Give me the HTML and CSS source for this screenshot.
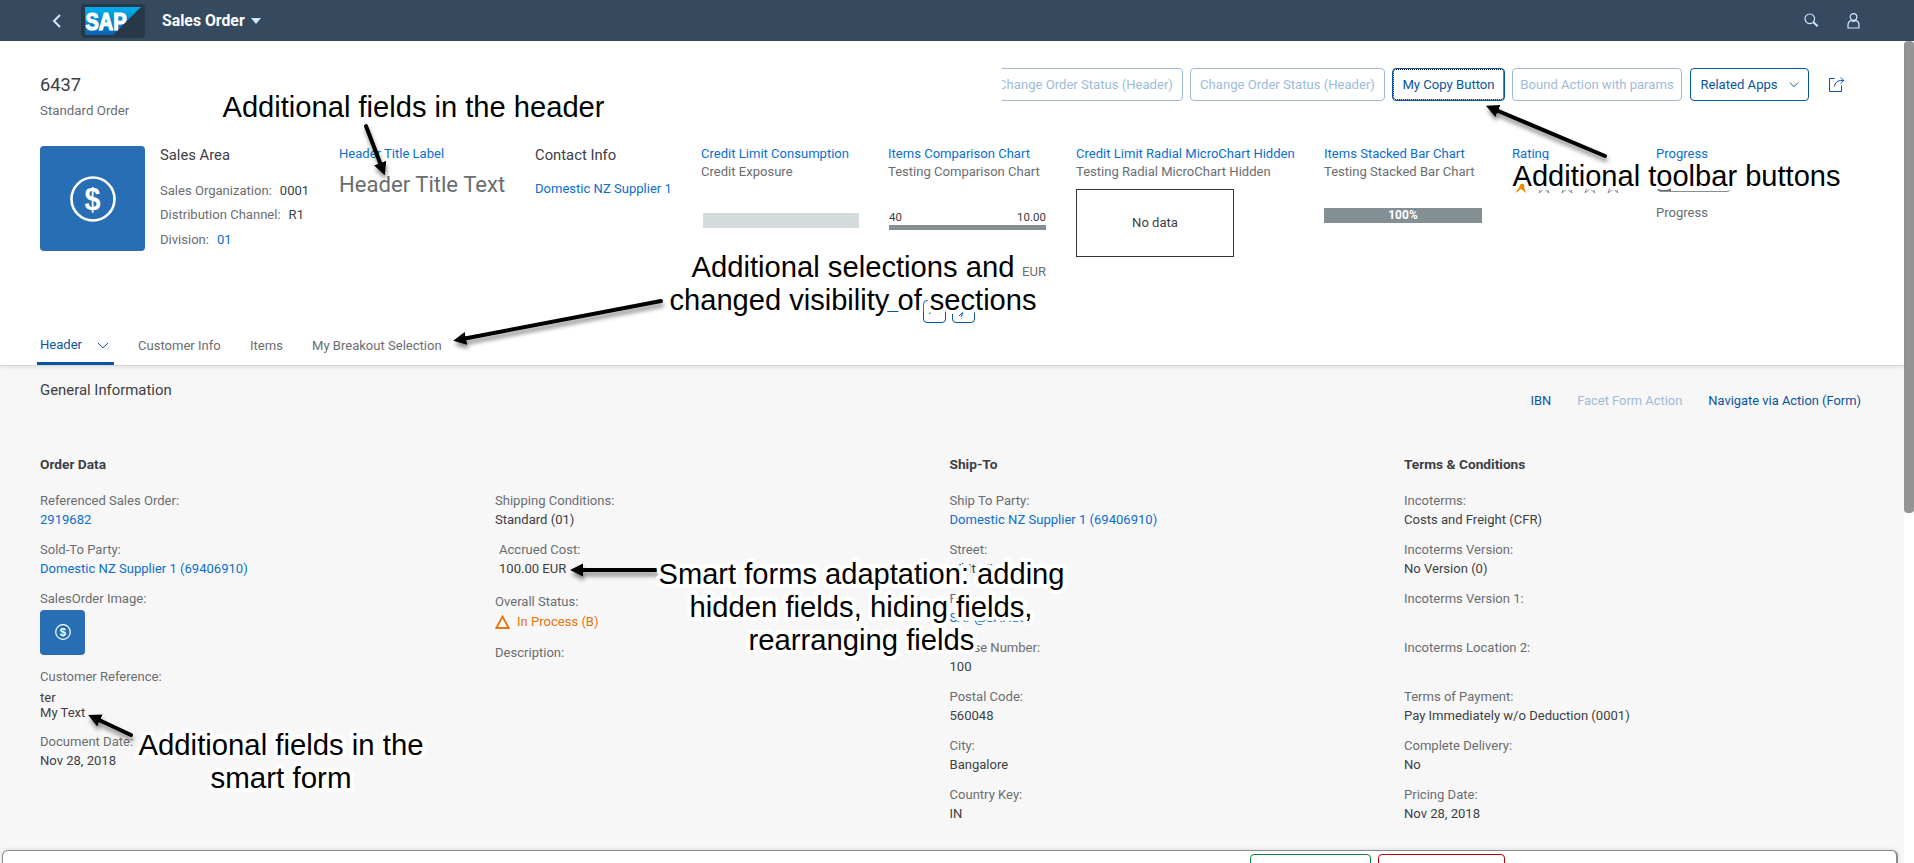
FILE: index.html
```html
<!DOCTYPE html>
<html lang="en">
<head>
<meta charset="utf-8">
<title>Sales Order</title>
<link rel="stylesheet" href="styles.css">
</head>
<body>
<div class="page">
  <header class="shell">
    <svg class="back" width="10" height="14" viewBox="0 0 10 14"><path d="M8 1 2 7l6 6" fill="none" stroke="#d1e8ff" stroke-width="2"/></svg>
    <div class="logo">
      <svg width="56" height="28" viewBox="0 0 56 28">
        <defs><linearGradient id="sap" x1="0" y1="0" x2="0" y2="1"><stop offset="0" stop-color="#00b1eb"/><stop offset="1" stop-color="#0a61b5"/></linearGradient></defs>
        <path d="M0 0h56L28 28H0z" fill="url(#sap)"/>
        <text class="logo-text" x="0.5" y="22.5" textLength="41" lengthAdjust="spacingAndGlyphs">SAP</text>
      </svg>
    </div>
    <span class="shell-title">Sales Order</span>
    <svg width="10" height="6" viewBox="0 0 10 6"><path d="M0 0h10L5 6z" fill="#d1e8ff"/></svg>
    <div class="shell-icons">
      <svg width="15" height="15" viewBox="0 0 15 15" fill="none" stroke="#d1e8ff"><circle cx="5.8" cy="5.8" r="4.8" stroke-width="1.2"/><path d="m9.3 9.3 4.4 4" stroke-width="2"/></svg>
      <svg width="13" height="16" viewBox="0 0 13 16" fill="none" stroke="#d1e8ff" stroke-width="1.2"><circle cx="6.5" cy="4" r="3.3"/><path d="M1 15v-3c0-2.500 1.500-4 3-4.500 1.500 1 3.500 1 5 0 1.500.5 3 2 3 4.500v3z"/></svg>
    </div>
  </header>
  <div class="body">
    <main class="content">
      <section class="object-header">
        <div class="title-row">
          <div class="titles"><h1>6437</h1><div class="subtitle">Standard Order</div></div>
          <div class="toolbar">
            <button class="btn disabled clipped">Change Order Status (Header)</button>
            <button class="btn disabled b-change">Change Order Status (Header)</button>
            <button class="btn focused">My Copy Button</button>
            <button class="btn disabled b-bound">Bound Action with params</button>
            <button class="btn b-related">Related Apps <svg width="10" height="6" viewBox="0 0 10 6"><path d="m1 .7 4 4 4-4" fill="none" stroke="#0854a0"/></svg></button>
            <svg class="share" width="16" height="15" viewBox="0 0 16 15" fill="none" stroke="#0854a0"><path d="M5.500 1.500h-5v13h12V8.500M5.500 9.500c.3-3.500 2.500-5.800 6-6h3M11.700.5l3 3-3 3"/></svg>
          </div>
        </div>
        <div class="facets">
          <div class="avatar"><svg width="46" height="46" viewBox="0 0 46 46"><circle cx="23" cy="23" r="21.500" fill="none" stroke="#fff" stroke-width="2.600"/><text x="14.500" y="33.500" textLength="16" lengthAdjust="spacingAndGlyphs" class="dollar">$</text></svg></div>
          <div class="facet area">
            <h2>Sales Area</h2>
            <div class="pair"><span>Sales Organization:</span><b>0001</b></div>
            <div class="pair"><span>Distribution Channel:</span><b>R1</b></div>
            <div class="pair"><span>Division:</span><a>01</a></div>
          </div>
          <div class="facet"><a class="facet-title">Header Title Label</a><div class="big">Header Title Text</div></div>
          <div class="facet contact"><h2>Contact Info</h2><a>Domestic NZ Supplier 1</a></div>
          <div class="facet"><a class="facet-title">Credit Limit Consumption</a><div class="facet-sub">Credit Exposure</div><div class="bullet"></div></div>
          <div class="facet"><a class="facet-title">Items Comparison Chart</a><div class="facet-sub">Testing Comparison Chart</div>
            <div class="compare"><span>40</span><span>10.00</span></div><div class="unit">EUR</div></div>
          <div class="facet"><a class="facet-title">Credit Limit Radial MicroChart Hidden</a><div class="facet-sub">Testing Radial MicroChart Hidden</div><div class="nodata">No data</div></div>
          <div class="facet"><a class="facet-title">Items Stacked Bar Chart</a><div class="facet-sub">Testing Stacked Bar Chart</div><div class="stacked">100%</div></div>
          <div class="facet"><a class="facet-title">Rating</a>
            <svg class="stars" width="114" height="18" viewBox="0 0 114 18" fill="none"><path d="m9 1 2 6h6l-5 4 2 6-5-4-5 4 2-6-5-4h6z" fill="#e78c07"/><g stroke="#8a8f94"><path id="star" d="m32 1 2 6h6l-5 4 2 6-5-4-5 4 2-6-5-4h6z"/><use href="#star" x="23"/><use href="#star" x="46"/><use href="#star" x="69"/></g></svg>
          </div>
          <div class="facet"><a class="facet-title">Progress</a><div class="progress"><i></i></div><div class="progress-label">Progress</div></div>
        </div>
        <div class="collapse"><i class="rule"></i>
          <span class="mini"><svg width="13" height="8" viewBox="0 0 13 8"><path d="m1 6 5.500-5L12 6" fill="none" stroke="#0854a0"/></svg></span>
          <span class="mini"><svg width="12" height="12" viewBox="0 0 12 12"><path d="m1 10 5-5 5 3M6 5 3 11" fill="none" stroke="#0854a0"/></svg></span>
        <i class="rule"></i></div>
        <nav class="tabs">
          <a class="tab active">Header <svg width="12" height="7" viewBox="0 0 12 7"><path d="m.8.800 5.200 5 5.200-5" fill="none" stroke="#0854a0"/></svg></a>
          <a class="tab t-cust">Customer Info</a><a class="tab t-items">Items</a><a class="tab">My Breakout Selection</a>
        </nav>
      </section>
      <section class="details">
        <div class="section-head"><h2>General Information</h2>
          <div class="links"><a>IBN</a><a class="off">Facet Form Action</a><a>Navigate via Action (Form)</a></div></div>
        <div class="form">
          <div class="col">
            <h3>Order Data</h3>
            <div class="field"><label>Referenced Sales Order:</label><a>2919682</a></div>
            <div class="field"><label>Sold-To Party:</label><a>Domestic NZ Supplier 1 (69406910)</a></div>
            <div class="field image"><label>SalesOrder Image:</label><div class="thumb"><svg width="16" height="16" viewBox="0 0 46 46"><circle cx="23" cy="23" r="21" fill="none" stroke="#fff" stroke-width="3.500"/><text x="14" y="34" class="dollar">$</text></svg></div></div>
            <div class="field ref"><label>Customer Reference:</label><p>ter</p><p>My Text</p></div>
            <div class="field"><label>Document Date:</label><p>Nov 28, 2018</p></div>
          </div>
          <div class="col">
            <h3></h3>
            <div class="field"><label>Shipping Conditions:</label><p>Standard (01)</p></div>
            <div class="field shifted"><label>Accrued Cost:</label><p>100.00 EUR</p></div>
            <div class="field status"><label>Overall Status:</label><p><svg width="15" height="14" viewBox="0 0 15 14"><path d="M7.500 1.500 13.700 13H1.300z" fill="none" stroke="#e9730c" stroke-width="1.800"/></svg>In Process (B)</p></div>
            <div class="field"><label>Description:</label></div>
          </div>
          <div class="col">
            <h3>Ship-To</h3>
            <div class="field"><label>Ship To Party:</label><a>Domestic NZ Supplier 1 (69406910)</a></div>
            <div class="field"><label>Street:</label><p>WhiteField</p></div>
            <div class="field"><label>Fax:</label><a>SAP@SAP.de</a></div>
            <div class="field"><label>House Number:</label><p>100</p></div>
            <div class="field"><label>Postal Code:</label><p>560048</p></div>
            <div class="field"><label>City:</label><p>Bangalore</p></div>
            <div class="field"><label>Country Key:</label><p>IN</p></div>
          </div>
          <div class="col">
            <h3>Terms &amp; Conditions</h3>
            <div class="field"><label>Incoterms:</label><p>Costs and Freight (CFR)</p></div>
            <div class="field"><label>Incoterms Version:</label><p>No Version (0)</p></div>
            <div class="field"><label>Incoterms Version 1:</label><p></p></div>
            <div class="field"><label>Incoterms Location 2:</label><p></p></div>
            <div class="field"><label>Terms of Payment:</label><p>Pay Immediately w/o Deduction (0001)</p></div>
            <div class="field"><label>Complete Delivery:</label><p>No</p></div>
            <div class="field"><label>Pricing Date:</label><p>Nov 28, 2018</p></div>
          </div>
        </div>
      </section>
      <footer class="footer"><span class="fbtn accept"></span><span class="fbtn reject"></span></footer>
    </main>
    <div class="scroll"><div class="thumb-bar"></div></div>
  </div>
  <svg class="notes" width="1914" height="863" viewBox="0 0 1914 863">
    <defs>
      <marker id="head" markerUnits="userSpaceOnUse" markerWidth="14" markerHeight="14" refX="1" refY="6.500" orient="auto"><path d="M0 0 13 6.500 0 13z"/></marker>
    </defs>
    <g class="arrows">
      <path d="M366 126 380.500 164" marker-end="url(#head)"/>
      <path d="M661 301 465 338.500" marker-end="url(#head)"/>
      <path d="M1605 156 1497 110.500" marker-end="url(#head)"/>
      <path d="M656 570H582" marker-end="url(#head)"/>
      <path d="M131 735 99 720" marker-end="url(#head)"/>
    </g>
    <g class="note">
      <text x="222.500" y="116.500" textLength="382" lengthAdjust="spacingAndGlyphs">Additional fields in the header</text>
      <text x="691.500" y="276.500" textLength="323" lengthAdjust="spacingAndGlyphs">Additional selections and</text>
      <text x="669.500" y="309.500" textLength="367" lengthAdjust="spacingAndGlyphs">changed visibility of sections</text>
      <text x="1512.500" y="185.500" textLength="328" lengthAdjust="spacingAndGlyphs">Additional toolbar buttons</text>
      <text x="658.500" y="583.500" textLength="406" lengthAdjust="spacingAndGlyphs">Smart forms adaptation: adding</text>
      <text x="689.500" y="616.500" textLength="343" lengthAdjust="spacingAndGlyphs">hidden fields, hiding fields,</text>
      <text x="748.500" y="649.500" textLength="226" lengthAdjust="spacingAndGlyphs">rearranging fields</text>
      <text x="138.500" y="754.500" textLength="285" lengthAdjust="spacingAndGlyphs">Additional fields in the</text>
      <text x="210.500" y="787.500" textLength="141" lengthAdjust="spacingAndGlyphs">smart form</text>
    </g>
  </svg>
</div>
</body>
</html>
```

FILE: styles.css
```css
* { box-sizing: border-box; }
body { margin: 0; background: #fff; font: 13.05px/18px Roboto, "Liberation Sans", sans-serif; color: #3c4044; overflow: hidden; }
h1, h2, h3, p { margin: 0; font-weight: 400; }
a { color: #0a6ed1; text-decoration: none; }
svg { display: block; }
.page { position: relative; width: 1914px; height: 863px; overflow: hidden; display: flex; flex-direction: column; }

.shell { height: 41px; flex: none; background: #354a5f; display: flex; align-items: center; padding: 0 54px 0 52px; }
.logo { width: 64px; height: 34px; margin-left: 19px; border-radius: 4px; background: #283848; display: flex; align-items: center; padding-left: 4px; }
.logo-text { font: bold 23px "Liberation Sans", sans-serif; fill: #fff; stroke: #fff; stroke-width: 1.2; }
.shell-title { margin: 0 6px 0 17px; color: #fff; font-size: 15.8px; font-weight: 700; }
.shell-icons { margin-left: auto; display: flex; gap: 28px; align-items: center; }

.body { flex: 1; min-height: 0; display: flex; }
.content { width: 1904px; display: flex; flex-direction: column; background: #f7f7f7; }
.scroll { width: 10px; background: #fff; }
.thumb-bar { height: 472px; background: #949494; border-radius: 4px; }

.object-header { height: 325px; flex: none; background: #fff; border-bottom: 1px solid #d9d9d9; box-shadow: 0 2px 3px rgba(0,0,0,.08); position: relative; padding-left: 40px; display: flex; flex-direction: column; }
.title-row { display: flex; justify-content: space-between; height: 105px; flex: none; }
.titles { padding-top: 32px; }
h1 { font-size: 18.3px; line-height: 24px; }
.subtitle { margin-top: 5px; color: #6a6d70; font-size: 13.300px; }
.toolbar { display: flex; align-items: center; margin-top: 27px; height: 33px; margin-right: 59px; overflow: hidden; width: 843px; justify-content: flex-end; }
.btn { height: 33px; flex: none; margin: 0 0 0 7px; padding: 0; border: 1px solid #0854a0; border-radius: 4px; background: #fff; color: #0854a0; font: 13.100px Roboto, sans-serif; display: flex; align-items: center; justify-content: center; gap: 11px; }
.disabled { border-color: #9dbbd9; color: #9dbbd9; }
.clipped, .b-change { width: 195px; }
.focused { width: 113px; outline: 1px dotted #000; outline-offset: -2px; }
.b-bound { width: 170px; }
.b-related { width: 119px; margin-left: 8px; }
.share { margin-left: 20px; flex: none; }

.facets { display: grid; grid-template-columns: 120px 179px 196px 166px 187px 188px 248px 188px 144px 1fr; height: 154px; flex: none; white-space: nowrap; }
.avatar { width: 105px; height: 105px; border-radius: 4px; background: #286eb4; display: grid; place-items: center; }
.dollar { font: bold 32px "Liberation Sans", sans-serif; fill: #fff; }
.facet h2 { line-height: 18px; font-size: 14.8px; }
.area h2 { margin-bottom: 14.500px; }
.pair { display: flex; gap: 8px; color: #6a6d70; line-height: 24.500px; }
.pair b { font-weight: 400; color: #3c4044; }
.facet-title { display: block; line-height: 16px; }
.facet-sub { color: #6a6d70; line-height: 18px; margin-top: 1px; }
.big { font-size: 22.100px; line-height: 26px; color: #6a6d70; margin-top: 9px; }
.contact a { display: block; margin-top: 16px; }
.bullet { width: 156px; height: 15px; background: #d5dadc; margin: 32px 0 0 2px; }
.compare { width: 157px; height: 21px; margin-top: 28px; margin-left: 1px; font-size: 11.500px; line-height: 16px; display: flex; justify-content: space-between; border-bottom: 5px solid #848f94; }
.unit { width: 157px; text-align: right; margin-top: 33px; margin-left: 1px; color: #6a6d70; }
.nodata { width: 158px; height: 68px; border: 1px solid #32363a; margin-top: 8px; display: grid; place-items: center; }
.stacked { width: 158px; height: 15px; background: #848f94; color: #fff; font: bold 12px/15px Roboto, sans-serif; text-align: center; margin-top: 27px; }
.stars { margin-top: 14px; }
.progress { width: 76px; height: 18px; margin-top: 12px; border: 1px solid #848f94; border-radius: 5px; overflow: hidden; }
.progress i { display: block; width: 14px; height: 100%; background: #6a6d70; }
.progress-label { color: #6a6d70; margin-top: 12px; }

.collapse { display: flex; gap: 6px; height: 23px; margin-left: 827px; align-items: center; }
.mini { width: 23px; height: 23px; flex: none; border: 1px solid #0854a0; border-radius: 4px; display: grid; place-items: center; }
.rule { width: 50px; height: 1px; flex: none; background: #0854a0; }

.tabs { display: flex; height: 42px; }
.tab { color: #6a6d70; line-height: 46px; height: 42px; }
.active { color: #0854a0; border-bottom: 3px solid #0854a0; width: 77px; margin-left: -3px; padding: 5px 0 0 3px; line-height: 34px; display: flex; align-items: center; gap: 15px; }
.t-cust { width: 112px; margin-left: 24px; }
.t-items { width: 62px; }

.details { flex: 1; min-height: 0; padding-left: 40px; }
.section-head { display: flex; justify-content: space-between; height: 89px; padding: 14px 43px 0 0; }
.section-head h2 { font-size: 14.9px; line-height: 20px; }
.links { display: flex; gap: 26px; padding-top: 12px; }
.links a { color: #0854a0; font-size: 12.900px; }
.links .off { color: #9dbbd9; }
.form { display: grid; grid-template-columns: 455px 454.500px 454.500px 1fr; }
h3 { font-size: 13.700px; line-height: 18px; height: 36.500px; font-weight: 700; }
.field { margin-bottom: 11px; }
.field label { display: block; color: #6a6d70; line-height: 18px; }
.field p, .field a { display: block; line-height: 20px; min-height: 20px; }
.image { margin-bottom: 13px; }
.thumb { width: 45px; height: 45px; border-radius: 4px; background: #286eb4; display: grid; place-items: center; margin-top: 2px; }
.field.ref { margin-bottom: 13px; }
.field.ref p { line-height: 15px; min-height: 15px; }
.ref label { margin-bottom: 4px; }
.shifted { padding-left: 4px; margin-bottom: 14px; }
.status p { color: #e9730c; display: flex; align-items: center; gap: 7px; line-height: 22px; }

.footer { height: 13px; flex: none; width: 1896px; margin-left: 2px; border: 1px solid #888b8e; border-width: 1px 2px 0 1px; border-radius: 6px 6px 0 0; background: #fff; display: flex; gap: 7px; padding: 3px 0 0 1247px; overflow: hidden; box-shadow: 0 0 4px rgba(0,0,0,.15); }
.fbtn { height: 30px; width: 121px; border: 1px solid #107e3e; border-radius: 4px; flex: none; }
.reject { width: 127px; border-color: #b00; }

.notes { position: absolute; left: 0; top: 0; }
.note { font: 29px "Liberation Sans", Arial, sans-serif; fill: #000; stroke: #fff; stroke-width: 8px; stroke-linejoin: round; paint-order: stroke fill; }
.arrows { fill: none; stroke: #000; stroke-width: 4px; stroke-linecap: round; filter: drop-shadow(1px 4px 2px rgba(0,0,0,.45)); }
marker path { fill: #000; stroke: none; }
```
